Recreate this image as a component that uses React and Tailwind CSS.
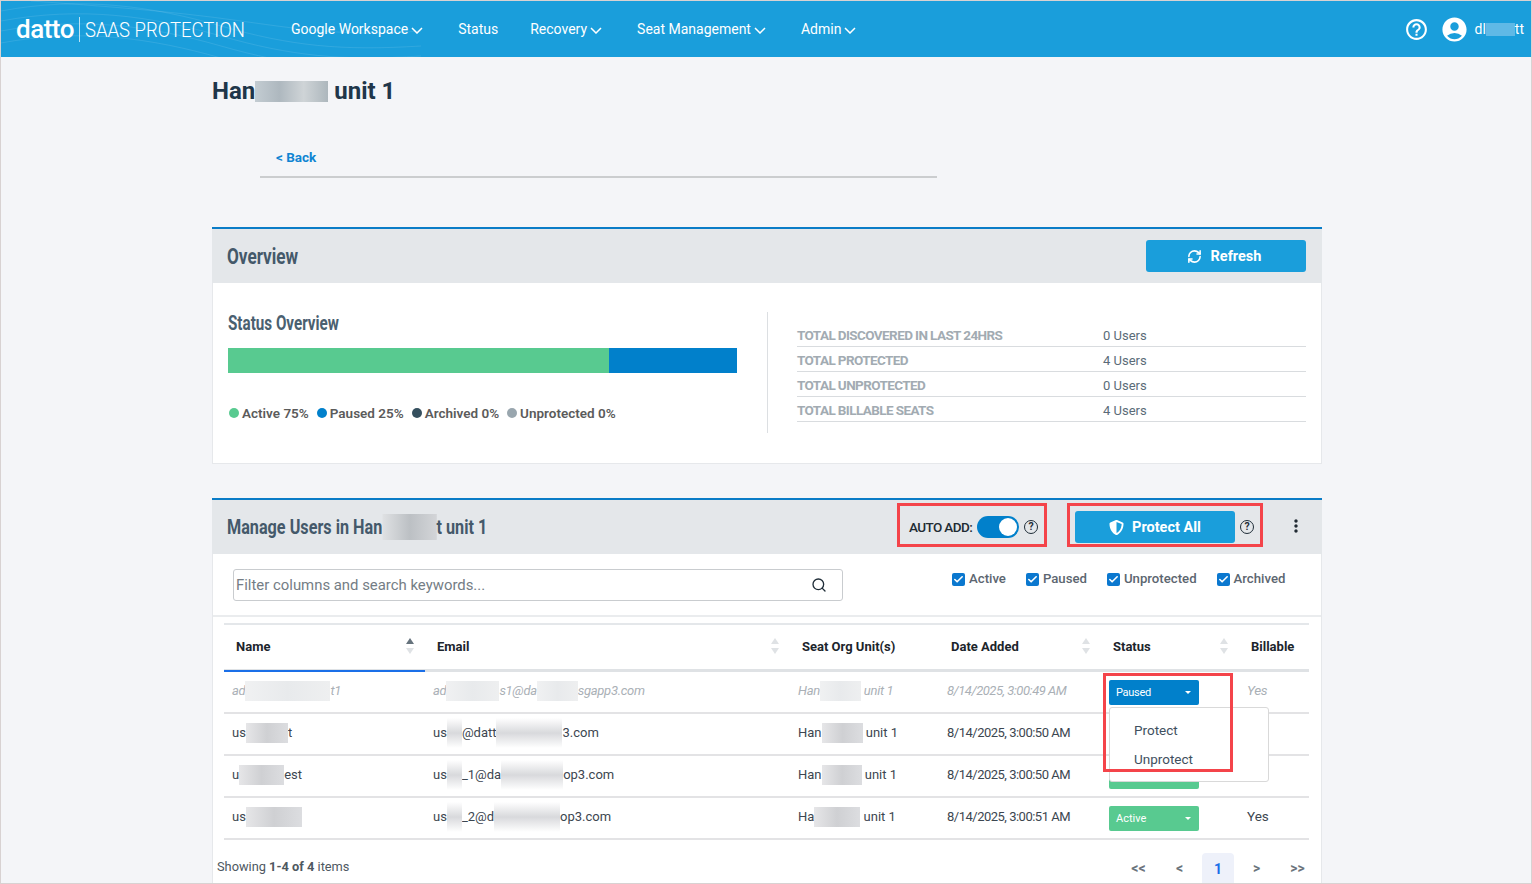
import { Check, RefreshCw, Search } from "lucide-react"
import { FaShieldAlt } from "react-icons/fa"
import { MdAccountCircle, MdHelpOutline, MdMoreVert } from "react-icons/md"

const columns = "grid grid-cols-[201px_365px_149px_162px_138px_70px]"

// smudged-out bits of text in the screenshot
function Smudge({ w, tall, light }) {
  const size = tall ? "h-[30px] -my-[8px]" : "h-[20px] -my-[4px]"
  const fill = light
    ? "bg-[linear-gradient(90deg,#f0f1f2,#e8eaec,#eeeff0)]"
    : tall
      ? "bg-[linear-gradient(180deg,#ffffff,#d8d9dc_50%,#ffffff)]"
      : "bg-[linear-gradient(90deg,#e6e6e8,#cfd0d3,#dcdde0)]"
  return (
    <span
      className={`relative z-10 inline-block align-middle ${size} ${fill}`}
      style={{ width: w }}
    />
  )
}

function NavItem({ label, menu }) {
  return (
    <span className={`flex items-center gap-[3px] text-[14px] text-white ${menu ? "mr-[3px]" : ""}`}>
      {label}
      {menu && (
        <svg width="12" height="7" viewBox="0 0 12 7" fill="none" stroke="#ffffff" strokeWidth="1.5" className="mt-[2px]">
          <path d="M1 1L6 6L11 1" />
        </svg>
      )}
    </span>
  )
}

function Header() {
  return (
    <header className="relative flex h-[56px] shrink-0 items-center overflow-hidden bg-[#1a9edb] text-white">
      <svg className="absolute left-0 top-0" width="420" height="56" fill="none" stroke="#ffffff" strokeOpacity="0.1">
        <path d="M0 10C80 -5 150 5 220 25S340 50 420 45" />
        <path d="M0 20C80 5 150 15 220 35S340 60 420 55" />
        <path d="M0 30C80 15 150 25 220 45S340 70 420 65" />
        <path d="M0 42C80 27 150 37 220 57" />
        <path d="M30 0C100 5 170 10 240 20S350 35 420 30" />
      </svg>
      <span className="relative ml-[15px] w-[59px] text-[26px] font-medium leading-none tracking-[-0.5px]">datto</span>
      <span className="relative ml-[4px] h-[25px] w-px bg-white/70" />
      <span className="relative ml-[5px] w-[159px] origin-left whitespace-nowrap pt-[2px] text-[20px] font-light leading-none [transform:scaleX(.925)]">SAAS PROTECTION</span>
      <nav className="relative ml-[47px] flex items-center gap-[32px] pt-px">
        <NavItem label="Google Workspace" menu />
        <NavItem label="Status" />
        <NavItem label="Recovery" menu />
        <NavItem label="Seat Management" menu />
        <NavItem label="Admin" menu />
      </nav>
      <div className="relative ml-auto mr-[7px] flex items-center">
        <MdHelpOutline className="h-[25px] w-[25px]" />
        <MdAccountCircle className="ml-[11px] h-[29px] w-[29px]" />
        <span className="ml-[6px] flex items-center text-[14px]">
          dl<span className="inline-block h-[13px] w-[29px] bg-[#5fb9e6]" />tt
        </span>
      </div>
    </header>
  )
}

function Overview() {
  const stats = [
    ["TOTAL DISCOVERED IN LAST 24HRS", "0 Users"],
    ["TOTAL PROTECTED", "4 Users"],
    ["TOTAL UNPROTECTED", "0 Users"],
    ["TOTAL BILLABLE SEATS", "4 Users"],
  ]
  const legend = [
    ["Active 75%", "bg-[#58ca90]"],
    ["Paused 25%", "bg-[#0180cb]"],
    ["Archived 0%", "bg-[#354f5e]"],
    ["Unprotected 0%", "bg-[#99a6ae]"],
  ]

  return (
    <section className="mt-[49px] w-[1110px] border-t-2 border-[#0a7cc7]">
      <div className="flex h-[54px] items-center justify-between bg-[#e4e7ea] pl-[15px] pr-[16px]">
        <h2 className="origin-left text-[22px] font-bold text-[#44596a] [transform:scaleX(.78)]">Overview</h2>
        <button className="flex h-[32px] w-[160px] items-center justify-center gap-[9px] rounded-[3px] bg-[#1a9edb] pr-[4px] pt-px text-[14.5px] font-bold text-white">
          <RefreshCw className="h-[15px] w-[15px]" strokeWidth={2.5} />
          Refresh
        </button>
      </div>
      <div className="flex h-[181px] items-start border-x border-b border-[#e6e8eb] bg-white pl-[15px] pt-[29px]">
        <div className="w-[509px]">
          <h3 className="-mt-px h-[24px] origin-left text-[20px] font-bold leading-[24px] text-[#4a6070] [transform:scaleX(.76)]">Status Overview</h3>
          <div className="mt-[13px] flex h-[25px]">
            <div className="w-[381px] bg-[#58ca90]" />
            <div className="flex-1 bg-[#0180cb]" />
          </div>
          <div className="mt-[30px] flex h-[20px] items-center gap-[8px] pl-[1px]">
            {legend.map(([label, dot]) => (
              <span key={label} className="flex items-center gap-[3px] text-[13.5px] font-semibold text-[#5b5b5b]">
                <span className={`h-[10px] w-[10px] rounded-full ${dot}`} />
                {label}
              </span>
            ))}
          </div>
        </div>
        <div className="ml-[30px] h-[121px] w-px bg-[#dcdfe2]" />
        <div className="ml-[29px] mt-[10px] w-[509px]">
          {stats.map(([label, value]) => (
            <div key={label} className="flex h-[25px] items-center border-b border-[#d9dcdf] pt-[2px]">
              <span className="w-[306px] text-[13.5px] font-bold tracking-[-0.6px] text-[#a2abb2]">{label}</span>
              <span className="pt-px text-[13px] text-[#5a6b78]">{value}</span>
            </div>
          ))}
        </div>
      </div>
    </section>
  )
}

function QuestionDot() {
  return (
    <span className="flex h-[14px] w-[14px] items-center justify-center rounded-full border-[1.5px] border-[#1f2d38] text-[10.5px] font-bold leading-none text-[#1f2d38]">
      ?
    </span>
  )
}

function Filter({ label }) {
  return (
    <span className="flex items-center gap-[4px] text-[13.2px] font-medium text-[#5c6670]">
      <span className="flex h-[13px] w-[13px] items-center justify-center rounded-[2px] bg-[#0b78cf]">
        <Check className="h-[11px] w-[11px] text-white" strokeWidth={3.5} />
      </span>
      {label}
    </span>
  )
}

function SortIcon({ active }) {
  return (
    <svg width="10" height="16" viewBox="0 0 10 16" className="mb-[2px]">
      <path d="M5 0L9 6H1Z" fill={active ? "#66737d" : "#dfe2e5"} />
      <path d="M5 16L1 10H9Z" fill="#dfe2e5" />
    </svg>
  )
}

function StatusButton({ label, color }) {
  return (
    <span className={`flex h-[25px] w-[90px] items-center justify-between rounded-[2px] pl-[7px] pr-[8px] text-[11px] not-italic text-white ${color}`}>
      <span className="pt-[3px]">{label}</span>
      <svg width="6" height="3" viewBox="0 0 6 3"><path d="M0 0H6L3 3Z" fill="#ffffff" /></svg>
    </span>
  )
}

const seatText = (w) => <>Han<Smudge w={w} /> unit 1</>

// the open menu hides the status label and billable value of the two middle rows
const rows = [
  {
    id: "admin",
    muted: true,
    name: <>ad<Smudge w={85} light />t1</>,
    email: <>ad<Smudge w={53} light />s1@da<Smudge w={41} light />sgapp3.com</>,
    seat: <>Han<Smudge w={41} light /> unit 1</>,
    date: "8/14/2025, 3:00:49 AM",
    status: "Paused",
    billable: "Yes",
  },
  {
    id: "user",
    name: <>us<Smudge w={42} />t</>,
    email: <>us<Smudge w={15} tall />@datt<Smudge w={66} tall />3.com</>,
    seat: seatText(41),
    date: "8/14/2025, 3:00:50 AM",
  },
  {
    id: "user1",
    name: <>u<Smudge w={45} />est</>,
    email: <>us<Smudge w={15} tall />_1@da<Smudge w={62} tall />op3.com</>,
    seat: seatText(40),
    date: "8/14/2025, 3:00:50 AM",
  },
  {
    id: "user2",
    name: <>us<Smudge w={56} /></>,
    email: <>us<Smudge w={15} tall />_2@d<Smudge w={66} tall />op3.com</>,
    seat: <>Ha<Smudge w={46} /> unit 1</>,
    date: "8/14/2025, 3:00:51 AM",
    status: "Active",
    billable: "Yes",
  },
]

function UserTable() {
  const headers = [
    { label: "Name", sort: true, active: true },
    { label: "Email", sort: true },
    { label: "Seat Org Unit(s)" },
    { label: "Date Added", sort: true },
    { label: "Status", sort: true },
    { label: "Billable" },
  ]

  return (
    <div className="relative ml-[11px] mt-[6px] w-[1085px] border-t-2 border-[#e4e7ea]">
      <div className={`${columns} h-[47px] border-b-[3px] border-[#dfe2e5]`}>
        {headers.map((h) => (
          <div
            key={h.label}
            className={`flex items-center justify-between pl-[12px] pr-[10px] text-[13px] font-bold text-[#1c252c] ${h.active ? "-mb-[3px] border-b-2 border-[#1a6fe8] pb-px" : ""}`}
          >
            <span>{h.label}</span>
            {h.sort && <SortIcon active={h.active} />}
          </div>
        ))}
      </div>
      {rows.map((row) => (
        <div
          key={row.id}
          className={`${columns} h-[42px] items-center border-b-2 border-[#e3e3e5] ${row.muted ? "text-[13px] italic tracking-[-0.3px] text-[#aab0b6]" : "text-[13px] text-[#3c4650]"}`}
        >
          <div className="pb-[3px] pl-[8px]">{row.name}</div>
          <div className="pb-[3px] pl-[8px]">{row.email}</div>
          <div className="pb-[3px] pl-[8px]">{row.seat}</div>
          <div className="pb-[3px] pl-[8px] tracking-[-0.5px]">{row.date}</div>
          <div className="pl-[8px]">
            <StatusButton label={row.status} color={row.status === "Paused" ? "bg-[#0180cb]" : "bg-[#58ca90]"} />
          </div>
          <div className="pb-[3px] pl-[8px] text-[13.5px]">{row.billable}</div>
        </div>
      ))}

      {/* open status menu and the red callout around it */}
      <div className="absolute left-[885px] top-[82px] z-20 h-[75px] w-[160px] rounded-[3px] border border-[#d9d9d9] bg-white pl-[24px] pt-[12px] text-[13.5px] text-[#3f5060]">
        <div className="h-[29px]">Protect</div>
        <div>Unprotect</div>
      </div>
      <div className="absolute left-[879px] top-[48px] z-30 h-[99px] w-[130px] border-[3px] border-[#f4444a]" />
    </div>
  )
}

function Pagination() {
  return (
    <div className="ml-auto mr-[5px] flex h-[31px] items-center text-[14px] font-bold text-[#6b747c]">
      <span className="w-[37px] text-center">&lt;&lt;</span>
      <span className="ml-[4px] w-[37px] text-center">&lt;</span>
      <span className="ml-[4px] flex h-[31px] w-[32px] items-center justify-center rounded-t-[4px] bg-[#eef1fa] pt-[2px] text-[#1a6fe8]">1</span>
      <span className="ml-[4px] w-[37px] text-center">&gt;</span>
      <span className="ml-[4px] w-[37px] text-center">&gt;&gt;</span>
    </div>
  )
}

function ManageUsers() {
  return (
    <section className="mt-[34px] w-[1110px] border-t-2 border-[#0a7cc7]">
      <div className="flex h-[54px] items-center bg-[#e4e7ea] pl-[15px] pr-[16px]">
        <h2 className="flex w-[340px] origin-left items-center whitespace-pre text-[20px] font-bold text-[#44596a] [transform:scaleX(.81)]">
          Manage Users in Han<span className="inline-block h-[26px] w-[67px] shrink-0 bg-[linear-gradient(90deg,#dfe1e3,#bcc0c4,#d3d5d8)]" />t unit 1
        </h2>
        <div className="-mt-[4px] ml-auto flex h-[44px] w-[150px] items-center border-[3px] border-[#f4444a] pl-[9px] pt-[4px]">
          <span className="text-[13.5px] font-medium tracking-[-0.6px] text-[#212b33]">AUTO ADD:</span>
          <span className="ml-[5px] flex h-[22px] w-[42px] items-center justify-end rounded-full bg-[#0180cb] pr-[2px]">
            <span className="h-[18px] w-[18px] rounded-full bg-white" />
          </span>
          <span className="ml-[5px]"><QuestionDot /></span>
        </div>
        <div className="-mt-[4px] ml-[20px] flex h-[44px] w-[196px] items-center border-[3px] border-[#f4444a] pl-[5px] pt-[4px]">
          <button className="flex h-[32px] w-[160px] items-center justify-center gap-[8px] rounded-[3px] bg-[#1a9edb] pt-px text-[14.5px] font-bold text-white">
            <FaShieldAlt className="h-[15px] w-[15px]" />
            Protect All
          </button>
          <span className="ml-[5px]"><QuestionDot /></span>
        </div>
        <MdMoreVert className="-mt-[2px] ml-[23px] h-[20px] w-[20px] text-[#212b33]" />
      </div>
      <div className="h-[329px] overflow-hidden border-x border-[#e6e8eb] bg-white">
        <div className="flex h-[63px] border-b-2 border-[#eaecee] pl-[20px] pt-[15px]">
          <label className="flex h-[32px] w-[610px] items-center justify-between rounded-[3px] border border-[#c9cccf] pl-[2px] pr-[15px] text-[14.9px] text-[#747d85]">
            Filter columns and search keywords...
            <Search className="h-[16px] w-[16px] text-[#1f2d38]" strokeWidth={2} />
          </label>
          <div className="ml-[109px] flex h-[20px] gap-[20px]">
            <Filter label="Active" />
            <Filter label="Paused" />
            <Filter label="Unprotected" />
            <Filter label="Archived" />
          </div>
        </div>
        <UserTable />
        <div className="flex items-start pl-[4px] pt-[13px]">
          <span className="pt-[4px] text-[12.8px] text-[#4e5861]">
            Showing <b>1-4 of 4</b> items
          </span>
          <Pagination />
        </div>
      </div>
    </section>
  )
}

export default function App() {
  return (
    <div className="flex h-[884px] w-[1532px] flex-col overflow-hidden border border-[#d8d2d2] bg-[#f4f5f8] font-['Roboto',sans-serif]">
      <Header />
      <main className="flex flex-col pl-[211px]">
        <h1 className="mt-[19px] flex h-[30px] items-center text-[24px] font-bold text-[#20364a]">
          Han<span className="mr-[6px] inline-block h-[21px] w-[73px] bg-[linear-gradient(90deg,#c3ccd2,#aeb8bf,#cfd4d7,#adb7bd)]" />unit 1
        </h1>
        <div className="ml-[48px] mt-[39px] h-[33px] w-[677px] border-b-2 border-[#cbcdcf] pl-[16px]">
          <a className="text-[13.5px] font-bold text-[#0f84d2]">&lt; Back</a>
        </div>
        <Overview />
        <ManageUsers />
      </main>
    </div>
  )
}
